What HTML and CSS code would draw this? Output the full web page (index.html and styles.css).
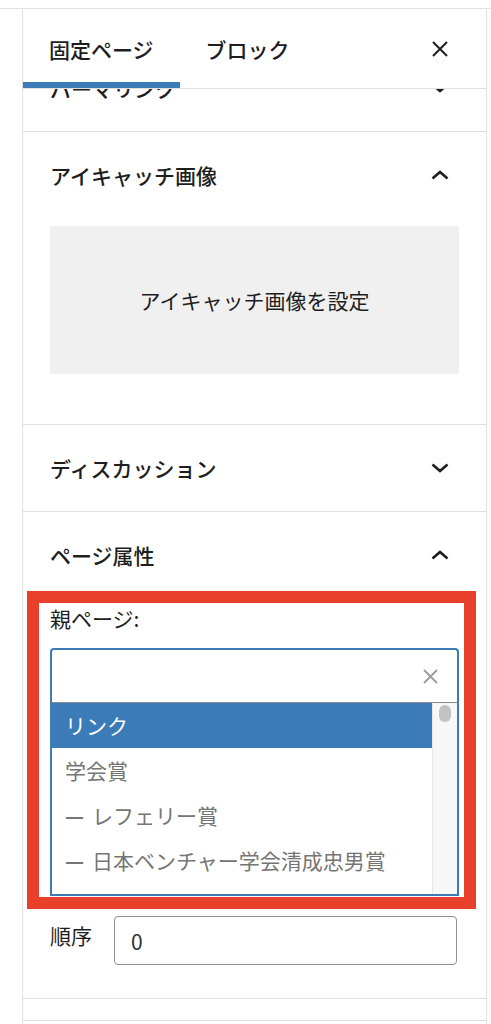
FILE: index.html
```html
<!DOCTYPE html>
<html lang="ja">
  <head>
    <meta charset="UTF-8" />
    <meta name="viewport" content="width=device-width, initial-scale=1.0" />
    <title>固定ページ設定</title>
    <link rel="stylesheet" href="styles.css">
  </head>
  <body>
    <div class="top-rule"></div>
    <div class="sidebar">
      <div class="sidebar-header">
        <div class="tabs">
          <button class="tab is-active">固定ページ</button>
          <button class="tab">ブロック</button>
        </div>
        <button class="close" aria-label="閉じる">
          <svg width="16" height="16" viewBox="0 0 16 16">
            <path d="M1 1L15 15M15 1L1 15" stroke="#1e1e1e" stroke-width="2" />
          </svg>
        </button>
      </div>

      <section class="panel panel-peek">
        <div class="panel-title">
          <span>パーマリンク</span>
          <svg width="18" height="10" viewBox="0 0 18 10">
            <path d="M1.5 1.5L9 8L16.5 1.5" fill="none" stroke="#1e1e1e" stroke-width="2.6" />
          </svg>
        </div>
      </section>

      <section class="panel">
        <div class="panel-title">
          <span>アイキャッチ画像</span>
          <svg width="18" height="10" viewBox="0 0 18 10">
            <path d="M1.5 8.5L9 2L16.5 8.5" fill="none" stroke="#1e1e1e" stroke-width="2.6" />
          </svg>
        </div>
        <div class="panel-body featured-body">
          <div class="featured-box">アイキャッチ画像を設定</div>
        </div>
      </section>

      <section class="panel">
        <div class="panel-title">
          <span>ディスカッション</span>
          <svg width="18" height="10" viewBox="0 0 18 10">
            <path d="M1.5 1.5L9 8L16.5 1.5" fill="none" stroke="#1e1e1e" stroke-width="2.6" />
          </svg>
        </div>
      </section>

      <section class="panel panel-attributes">
        <div class="panel-title">
          <span>ページ属性</span>
          <svg width="18" height="10" viewBox="0 0 18 10">
            <path d="M1.5 8.5L9 2L16.5 8.5" fill="none" stroke="#1e1e1e" stroke-width="2.6" />
          </svg>
        </div>
        <div class="panel-body attributes-body">
          <label class="field-label">親ページ:</label>
          <div class="combobox">
            <svg width="15" height="15" viewBox="0 0 15 15">
              <path d="M1 1L14 14M14 1L1 14" stroke="#9a9a9a" stroke-width="1.8" />
            </svg>
          </div>
          <div class="listbox">
            <ul class="options">
              <li class="option is-highlighted">リンク</li>
              <li class="option">学会賞</li>
              <li class="option"><span class="dash">—</span>レフェリー賞</li>
              <li class="option"><span class="dash">—</span>日本ベンチャー学会清成忠男賞</li>
            </ul>
            <div class="scrollbar"><div class="thumb"></div></div>
          </div>
          <div class="order-row">
            <label class="order-label">順序</label>
            <input class="order-input" type="text" value="0" />
          </div>
        </div>
        <div class="highlight-frame"></div>
      </section>

      <section class="panel panel-next"></section>
    </div>
  </body>
</html>
```

FILE: styles.css
```css
body {
  margin: 0;
  font-family: "Noto Sans CJK JP", "Noto Sans", sans-serif;
  color: #1e1e1e;
  background-color: #ffffff;
}

.top-rule {
  margin-top: 8px;
  border-top: 1px solid #e2e2e2;
}

.sidebar {
  margin-left: 22px;
  width: 463px;
  height: 1015px;
  border-left: 1px solid #e0e0e0;
  border-right: 1px solid #e0e0e0;
  overflow: hidden;
}

.sidebar-header {
  position: relative;
  z-index: 1;
  height: 79px;
  background-color: #ffffff;
  border-bottom: 1px solid #e0e0e0;
  display: flex;
  justify-content: space-between;
  padding-right: 38px;
}

.tabs {
  display: flex;
}

.tab {
  border: none;
  background: none;
  padding: 0 26px;
  font-family: inherit;
  font-size: 21px;
  font-weight: 500;
  color: #1e1e1e;
}

.tab.is-active {
  box-shadow: inset 0 -6px 0 #3a7bb8;
}

.close {
  border: none;
  background: none;
  padding: 0;
  display: flex;
  align-items: center;
}

.panel {
  border-bottom: 1px solid #e0e0e0;
}

.panel-peek {
  margin-top: -44px;
}

.panel-title {
  height: 86px;
  display: flex;
  justify-content: space-between;
  align-items: center;
  padding: 0 37px 0 27px;
  font-size: 21px;
  font-weight: 500;
}

.panel-body {
  padding: 0 27px;
}

.featured-body {
  padding-top: 8px;
  padding-bottom: 50px;
}

.featured-box {
  height: 148px;
  background-color: #f0f0f0;
  border-radius: 2px;
  display: flex;
  justify-content: center;
  align-items: center;
  font-size: 21px;
}

.panel-attributes {
  position: relative;
}

.attributes-body {
  padding-top: 6px;
  padding-bottom: 33px;
}

.field-label {
  display: block;
  font-size: 21px;
  line-height: 28px;
}

.combobox {
  margin-top: 16px;
  height: 55px;
  box-sizing: border-box;
  border: 2px solid #3a7bb8;
  border-bottom: 1px solid #8a8a8a;
  border-radius: 4px 4px 0 0;
  display: flex;
  justify-content: flex-end;
  align-items: center;
  padding-right: 19px;
}

.listbox {
  height: 193px;
  box-sizing: border-box;
  border: 2px solid #3a7bb8;
  border-top: none;
  display: flex;
  overflow: hidden;
}

.options {
  flex: 1;
  list-style: none;
  margin: 0;
  padding: 0;
}

.option {
  height: 45px;
  line-height: 45px;
  padding-left: 13px;
  font-size: 21px;
  color: #757575;
  white-space: nowrap;
}

.option.is-highlighted {
  background-color: #3a7bb8;
  color: #ffffff;
}

.dash {
  display: inline-block;
  width: 27px;
  font-weight: 700;
}

.scrollbar {
  width: 24px;
  background-color: #f7f7f7;
  border-left: 1px solid #e6e6e6;
}

.thumb {
  width: 12px;
  height: 17px;
  margin: 2px auto 0;
  border-radius: 6px;
  background-color: #c2c2c2;
}

.order-row {
  margin-top: 20px;
  display: flex;
  align-items: flex-start;
}

.order-label {
  width: 64px;
  margin-top: 5px;
  font-size: 21px;
  line-height: 28px;
}

.order-input {
  width: 343px;
  height: 49px;
  box-sizing: border-box;
  border: 1px solid #8c8f94;
  border-radius: 4px;
  padding: 0 16px;
  font-family: inherit;
  font-size: 21px;
  color: #2c3338;
}

.highlight-frame {
  position: absolute;
  top: 79px;
  left: 4px;
  width: 449px;
  height: 318px;
  box-sizing: border-box;
  border: 12px solid #e8402a;
  pointer-events: none;
}

.panel-next {
  height: 21px;
}
```
